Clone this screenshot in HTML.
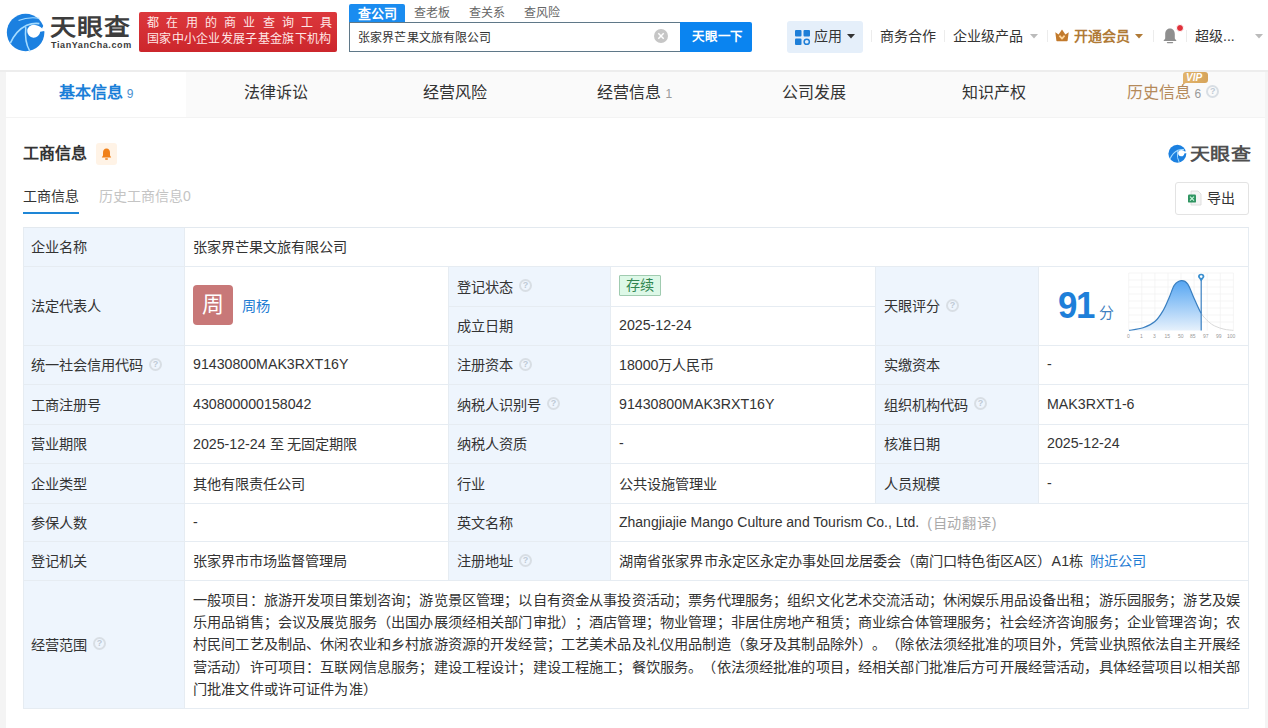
<!DOCTYPE html>
<html lang="zh-CN"><head><meta charset="utf-8">
<style>
*{box-sizing:border-box;margin:0;padding:0}
html,body{width:1268px;height:728px;overflow:hidden}
body{background:#f4f4f4;font-family:"Liberation Sans",sans-serif;text-spacing-trim:space-all;color:#333;position:relative}
.abs{position:absolute}
.nw{white-space:nowrap}
#hdr{position:absolute;left:0;top:0;width:1268px;height:70px;background:#fff;border-bottom:0}
#card{position:absolute;left:6px;top:72px;width:1259px;height:656px;background:#fff}
#hline{position:absolute;left:0;top:70px;width:1268px;height:2px;background:#ededed}
#tabs{position:absolute;left:6px;top:72px;width:1259px;height:46px;background:#fafafa;border-bottom:1px solid #f3f3f3}
.tab{position:absolute;top:0;height:45px;width:180px;text-align:center;font-size:16px;line-height:42px;color:#333}
.tab.act{background:#fff;color:#1b7fd8;font-weight:bold}
.tab sup{font-size:12px;font-weight:normal;vertical-align:baseline;color:#999;margin-left:4px}
.tab.act sup{color:#4a8fd0;margin-left:4px}
table{border-collapse:collapse}
#tbl{position:absolute;left:23px;top:227px;width:1225px;border:1px solid #e8edf2}
.lbl{background:#eef5fd}
.cell{position:absolute;font-size:14px;line-height:16px;white-space:nowrap}
.q{display:inline-block;width:13px;height:13px;border:2px solid #d8dee4;border-radius:50%;font-size:9px;line-height:9px;text-align:center;color:#bfcad5;font-weight:bold;vertical-align:middle;margin-left:6px;position:relative;top:0px}

.c{position:absolute;border-right:1px solid #e6ecf2;border-bottom:1px solid #e6ecf2;font-size:14.2px;padding-bottom:2px;color:#333;white-space:nowrap;display:flex;align-items:center;padding-left:8px}
.l{background:#eef5fd}
</style></head><body>
<div id="hdr">
  <svg class="abs" style="left:4px;top:10px" width="46" height="46" viewBox="0 0 728 728">
    <circle cx="342" cy="356" r="297" fill="#1b80e0"/>
    <path d="M600 130 Q660 230 600 290 L728 300 L728 100 Z" fill="#fff"/>
    <path d="M470 232 A103 103 0 1 0 573 345 L660 330 L660 280 L600 290 Q560 240 470 232 Z" fill="#fff"/>
    <path d="M100 525 Q190 320 360 240 Q450 205 560 215" stroke="#a6dcff" stroke-width="26" fill="none"/>
    <path d="M410 655 Q320 500 345 270" stroke="#a6dcff" stroke-width="24" fill="none"/>
    <path d="M230 165 Q380 105 560 130" stroke="#a6dcff" stroke-width="18" fill="none"/>
</svg>
  <div class="abs nw" style="left:50px;top:13px;font-size:26px;line-height:32px;font-weight:bold;color:#3d3d3d;letter-spacing:1px;transform:scaleY(0.86);transform-origin:0 0">天眼查</div>
  <div class="abs nw" style="left:51px;top:40px;font-size:9px;line-height:10px;font-weight:bold;color:#3a3a3a;letter-spacing:0.6px">TianYanCha.com</div>
  <div class="abs" style="left:139px;top:12px;width:198px;height:40px;background:linear-gradient(#dc383c,#cc262c);border-radius:2px"></div>
  <div class="abs nw" style="left:147px;top:15px;font-size:12px;line-height:16px;color:#ffe6e6;letter-spacing:7.25px">都在用的商业查询工具</div>
  <div class="abs nw" style="left:147px;top:31px;font-size:12px;line-height:16px;color:#ffe6e6;letter-spacing:0.3px">国家中小企业发展子基金旗下机构</div>
  <div class="abs" style="left:349px;top:4px;width:56px;height:19px;background:#1a8cf0;border-radius:2px 2px 0 0"></div>
  <div class="abs nw" style="left:358px;top:5px;font-size:13px;line-height:17px;color:#fff;font-weight:bold">查公司</div>
  <div class="abs nw" style="left:414px;top:5px;font-size:12px;line-height:17px;color:#666">查老板</div>
  <div class="abs nw" style="left:469px;top:5px;font-size:12px;line-height:17px;color:#666">查关系</div>
  <div class="abs nw" style="left:524px;top:5px;font-size:12px;line-height:17px;color:#666">查风险</div>
  <div class="abs" style="left:349px;top:22px;width:332px;height:30px;border:1px solid #5f7888;border-right:none;background:#fff"></div>
  <div class="abs nw" style="left:358px;top:30px;font-size:12px;line-height:16px;color:#333;letter-spacing:0.15px">张家界芒果文旅有限公司</div>
  <div class="abs" style="left:654px;top:29px;width:14px;height:14px;border-radius:50%;background:#c6c6c6"></div>
  <svg class="abs" style="left:654px;top:29px" width="14" height="14" viewBox="0 0 14 14"><path d="M4.3 4.3L9.7 9.7M9.7 4.3L4.3 9.7" stroke="#fff" stroke-width="1.5"/></svg>
  <div class="abs" style="left:680px;top:22px;width:72px;height:30px;background:#0a84f0;border-radius:0 2px 2px 0"></div>
  <div class="abs nw" style="left:692px;top:29px;font-size:12.5px;line-height:16px;color:#fff;font-weight:bold;letter-spacing:-0.2px">天眼一下</div>
  <div class="abs" style="left:787px;top:21px;width:76px;height:32px;background:#e5effa;border-radius:3px"></div>
  <svg class="abs" style="left:795px;top:30px" width="16" height="16" viewBox="0 0 16 16">
    <rect x="0" y="0" width="6.5" height="6.5" rx="1" fill="#1f7fd8"/><rect x="8.5" y="0" width="6.5" height="6.5" rx="1" fill="#1f7fd8"/>
    <rect x="0" y="8.5" width="6.5" height="6.5" rx="1" fill="#1f7fd8"/><circle cx="11.75" cy="11.75" r="2.6" fill="none" stroke="#1f7fd8" stroke-width="1.5"/>
  </svg>
  <div class="abs nw" style="left:814px;top:28px;font-size:14px;line-height:17px;color:#333">应用</div>
  <svg class="abs" style="left:847px;top:34px" width="8" height="5" viewBox="0 0 8 5"><path d="M0 0H8L4 4.5Z" fill="#333"/></svg>
  <div class="abs" style="left:871px;top:30px;width:1px;height:12px;background:#ececec"></div>
  <div class="abs nw" style="left:880px;top:28px;font-size:14px;line-height:17px;color:#333">商务合作</div>
  <div class="abs" style="left:944px;top:30px;width:1px;height:12px;background:#ececec"></div>
  <div class="abs nw" style="left:953px;top:28px;font-size:14px;line-height:17px;color:#333">企业级产品</div>
  <svg class="abs" style="left:1030px;top:34px" width="8" height="5" viewBox="0 0 8 5"><path d="M0 0H8L4 4.5Z" fill="#bbb"/></svg>
  <div class="abs" style="left:1047px;top:30px;width:1px;height:12px;background:#ececec"></div>
  <svg class="abs" style="left:1055px;top:29px" width="14" height="13" viewBox="0 0 14 13">
    <path d="M0.3 3.2 L3.6 5.6 L7 0.4 L10.4 5.6 L13.7 3.2 L12.6 11.8 Q12.5 12.2 12 12.2 L2 12.2 Q1.5 12.2 1.4 11.8 Z" fill="#c27a2c"/>
    <path d="M4.4 6.6 L7 9.6 L9.6 6.6" stroke="#ffd59a" stroke-width="1.7" fill="none" stroke-linejoin="round"/>
  </svg>
  <div class="abs nw" style="left:1074px;top:28px;font-size:14px;line-height:17px;color:#b07a36;font-weight:bold">开通会员</div>
  <svg class="abs" style="left:1135px;top:34px" width="8" height="5" viewBox="0 0 8 5"><path d="M0 0H8L4 4.5Z" fill="#b07a36"/></svg>
  <div class="abs" style="left:1153px;top:30px;width:1px;height:12px;background:#ececec"></div>
  <svg class="abs" style="left:1162px;top:27px" width="16" height="18" viewBox="0 0 16 18">
    <path d="M8 1.5 C4.8 1.5 3.2 4 3.2 7.2 L3.2 11.6 L1.4 14 L14.6 14 L12.8 11.6 L12.8 7.2 C12.8 4 11.2 1.5 8 1.5Z" fill="#8f8f8f"/>
    <path d="M5.5 15.6 H10.5" stroke="#8f8f8f" stroke-width="1.4" stroke-linecap="round"/>
  </svg>
  <div class="abs" style="left:1176px;top:24px;width:8px;height:8px;border-radius:50%;background:#e0303a;border:1px solid #fff"></div>
  <div class="abs" style="left:1186px;top:30px;width:1px;height:12px;background:#ececec"></div>
  <div class="abs nw" style="left:1195px;top:28px;font-size:14px;line-height:17px;color:#333">超级...</div>
  <svg class="abs" style="left:1255px;top:34px" width="8" height="5" viewBox="0 0 8 5"><path d="M0 0H8L4 4.5Z" fill="#bbb"/></svg>
</div>
<div id="hline"></div>
<div id="card"></div>
<div id="tabs">
  <div class="tab act" style="left:0">基本信息<sup>9</sup></div>
  <div class="tab" style="left:179.6px">法律诉讼</div>
  <div class="tab" style="left:359.2px">经营风险</div>
  <div class="tab" style="left:538.8px">经营信息<sup>1</sup></div>
  <div class="tab" style="left:718.4px">公司发展</div>
  <div class="tab" style="left:898px">知识产权</div>
  <div class="tab" style="left:1077.6px;color:#b58a5a;text-align:left;padding-left:43px">历史信息<sup>6</sup><span class="q" style="margin-left:5px;top:-2px">?</span></div>
</div>
<div class="abs nw" style="left:23px;top:144px;font-size:16px;line-height:20px;font-weight:bold;color:#333">工商信息</div>
<div class="abs" style="left:96px;top:143px;width:21px;height:22px;background:#fff3e6;border-radius:3px"></div>
<svg class="abs" style="left:100px;top:147px" width="13" height="14" viewBox="0 0 13 14"><path d="M6.5 1.5C4.2 1.5 3 3.4 3 5.8V8.6L1.8 10.6H11.2L10 8.6V5.8C10 3.4 8.8 1.5 6.5 1.5Z" fill="#f08019"/><rect x="5" y="11.2" width="3" height="1.6" rx="0.8" fill="#f08019"/></svg>
<div class="abs nw" style="left:23px;top:188px;font-size:14px;line-height:17px;color:#333">工商信息</div>
<div class="abs" style="left:23px;top:212px;width:56px;height:2px;background:#1e86d6"></div>
<div class="abs nw" style="left:99px;top:188px;font-size:14px;line-height:17px;color:#c4c4c4">历史工商信息0</div>
<div id="tbl2">
<div class="c l" style="left:23px;top:227px;width:162px;height:40px;">企业名称</div>
<div class="c" style="left:185px;top:227px;width:1064px;height:40px;">张家界芒果文旅有限公司</div>
<div class="c l" style="left:23px;top:267px;width:162px;height:79px;">法定代表人</div>
<div class="c" style="left:185px;top:267px;width:264px;height:79px;"><span style="display:inline-block;width:40px;height:40px;border-radius:4px;background:#c87878;color:#fff;font-size:22px;line-height:40px;text-align:center;margin-right:9px">周</span><span style="color:#1f7cd3">周杨</span></div>
<div class="c l" style="left:449px;top:267px;width:162px;height:40px;">登记状态<span class="q">?</span></div>
<div class="c" style="left:611px;top:267px;width:265px;height:40px;"><span style="display:inline-block;height:21px;line-height:19px;padding:0 6px;border:1px solid #a0cbb0;background:#ddf8e7;color:#2f8550;border-radius:1px">存续</span></div>
<div class="c l" style="left:449px;top:307px;width:162px;height:39px;">成立日期</div>
<div class="c" style="left:611px;top:307px;width:265px;height:39px;">2025-12-24</div>
<div class="c l" style="left:876px;top:267px;width:163px;height:79px;">天眼评分<span class="q">?</span></div>
<div class="c" style="left:1039px;top:267px;width:210px;height:79px;"></div>
<div class="c l" style="left:23px;top:346px;width:162px;height:39px;">统一社会信用代码<span class="q">?</span></div>
<div class="c" style="left:185px;top:346px;width:264px;height:39px;">91430800MAK3RXT16Y</div>
<div class="c l" style="left:449px;top:346px;width:162px;height:39px;">注册资本<span class="q">?</span></div>
<div class="c" style="left:611px;top:346px;width:265px;height:39px;">18000万人民币</div>
<div class="c l" style="left:876px;top:346px;width:163px;height:39px;">实缴资本</div>
<div class="c" style="left:1039px;top:346px;width:210px;height:39px;">-</div>
<div class="c l" style="left:23px;top:385px;width:162px;height:40px;">工商注册号</div>
<div class="c" style="left:185px;top:385px;width:264px;height:40px;">430800000158042</div>
<div class="c l" style="left:449px;top:385px;width:162px;height:40px;">纳税人识别号<span class="q">?</span></div>
<div class="c" style="left:611px;top:385px;width:265px;height:40px;">91430800MAK3RXT16Y</div>
<div class="c l" style="left:876px;top:385px;width:163px;height:40px;">组织机构代码<span class="q">?</span></div>
<div class="c" style="left:1039px;top:385px;width:210px;height:40px;">MAK3RXT1-6</div>
<div class="c l" style="left:23px;top:425px;width:162px;height:39px;">营业期限</div>
<div class="c" style="left:185px;top:425px;width:264px;height:39px;">2025-12-24 至 无固定期限</div>
<div class="c l" style="left:449px;top:425px;width:162px;height:39px;">纳税人资质</div>
<div class="c" style="left:611px;top:425px;width:265px;height:39px;">-</div>
<div class="c l" style="left:876px;top:425px;width:163px;height:39px;">核准日期</div>
<div class="c" style="left:1039px;top:425px;width:210px;height:39px;">2025-12-24</div>
<div class="c l" style="left:23px;top:464px;width:162px;height:40px;">企业类型</div>
<div class="c" style="left:185px;top:464px;width:264px;height:40px;">其他有限责任公司</div>
<div class="c l" style="left:449px;top:464px;width:162px;height:40px;">行业</div>
<div class="c" style="left:611px;top:464px;width:265px;height:40px;">公共设施管理业</div>
<div class="c l" style="left:876px;top:464px;width:163px;height:40px;">人员规模</div>
<div class="c" style="left:1039px;top:464px;width:210px;height:40px;">-</div>
<div class="c l" style="left:23px;top:504px;width:162px;height:38px;">参保人数</div>
<div class="c" style="left:185px;top:504px;width:264px;height:38px;">-</div>
<div class="c l" style="left:449px;top:504px;width:162px;height:38px;">英文名称</div>
<div class="c" style="left:611px;top:504px;width:638px;height:38px;"><span style="font-size:14px">Zhangjiajie Mango Culture and Tourism Co., Ltd.</span><span style="color:#aaa;margin-left:8px;letter-spacing:0.8px">(自动翻译)</span></div>
<div class="c l" style="left:23px;top:542px;width:162px;height:39px;">登记机关</div>
<div class="c" style="left:185px;top:542px;width:264px;height:39px;">张家界市市场监督管理局</div>
<div class="c l" style="left:449px;top:542px;width:162px;height:39px;">注册地址<span class="q">?</span></div>
<div class="c" style="left:611px;top:542px;width:638px;height:39px;"><span style="letter-spacing:0.1px">湖南省张家界市永定区永定办事处回龙居委会（南门口特色街区A区）A1栋</span><span style="color:#1f7cd3;margin-left:7px">附近公司</span></div>
<div class="c l" style="left:23px;top:581px;width:162px;height:128px;">经营范围<span class="q">?</span></div>
<div class="c" style="left:185px;top:581px;width:1064px;height:128px;"><div style="line-height:22.2px;white-space:nowrap;overflow:hidden;width:1056px;letter-spacing:0.15px;position:relative;top:1px">一般项目：旅游开发项目策划咨询；游览景区管理；以自有资金从事投资活动；票务代理服务；组织文化艺术交流活动；休闲娱乐用品设备出租；游乐园服务；游艺及娱<br>乐用品销售；会议及展览服务（出国办展须经相关部门审批）；酒店管理；物业管理；非居住房地产租赁；商业综合体管理服务；社会经济咨询服务；企业管理咨询；农<br>村民间工艺及制品、休闲农业和乡村旅游资源的开发经营；工艺美术品及礼仪用品制造（象牙及其制品除外）。（除依法须经批准的项目外，凭营业执照依法自主开展经<br>营活动）许可项目：互联网信息服务；建设工程设计；建设工程施工；餐饮服务。（依法须经批准的项目，经相关部门批准后方可开展经营活动，具体经营项目以相关部<br>门批准文件或许可证件为准）</div></div>
<div class="abs" style="left:23px;top:227px;width:1226px;height:482px;border:1px solid #e6ecf2;border-top-color:#e3e9ef;pointer-events:none"></div>
</div><!--/tbl2-->
<div class="abs nw" style="left:1058px;top:285px;font-size:37.5px;line-height:40px;font-weight:bold;color:#1e7fd9;letter-spacing:-1.5px;transform:scaleX(0.93);transform-origin:0 0">91</div>
<div class="abs nw" style="left:1099px;top:303.5px;font-size:15px;line-height:17px;color:#3f7fc0">分</div>
<svg class="abs" style="left:1124px;top:270px" width="116" height="72" viewBox="0 0 116 72">
  <defs><linearGradient id="gf" x1="0" y1="0" x2="0" y2="1"><stop offset="0" stop-color="#55a5f2"/><stop offset="1" stop-color="#e6f1fc"/></linearGradient></defs>
  <g stroke="#f0f0f0" stroke-width="0.7">
    <path d="M4.7 3H109.4M4.7 10H109.4M4.7 17H109.4M4.7 24H109.4M4.7 31H109.4M4.7 38H109.4M4.7 45H109.4M4.7 52H109.4"/>
    <path d="M4.7 3V60.6M17.8 3V60.6M30.9 3V60.6M44 3V60.6M57 3V60.6M70.1 3V60.6M83.2 3V60.6M96.3 3V60.6M109.4 3V60.6"/>
  </g>
  <path d="M5.1,60.4 C7.43,59.97 14.80,59.28 19.1,57.8 C23.40,56.32 27.57,54.37 30.9,51.5 C34.23,48.63 36.68,44.68 39.1,40.6 C41.52,36.52 43.52,31.23 45.4,27 C47.28,22.77 48.43,17.92 50.4,15.2 C52.37,12.48 55.00,10.92 57.2,10.7 C59.40,10.48 61.48,11.03 63.6,13.9 C65.72,16.77 67.63,23.00 69.9,27.9 C72.17,32.80 74.78,39.37 77.2,43.3 L77.2,60.4 L5.1,60.4 Z" fill="url(#gf)"/>
  <path d="M5.1,60.4 C7.43,59.97 14.80,59.28 19.1,57.8 C23.40,56.32 27.57,54.37 30.9,51.5 C34.23,48.63 36.68,44.68 39.1,40.6 C41.52,36.52 43.52,31.23 45.4,27 C47.28,22.77 48.43,17.92 50.4,15.2 C52.37,12.48 55.00,10.92 57.2,10.7 C59.40,10.48 61.48,11.03 63.6,13.9 C65.72,16.77 67.63,23.00 69.9,27.9 C72.17,32.80 74.78,39.37 77.2,43.3" stroke="#3a7fc0" stroke-width="1.2" fill="none"/>
  <path d="M77.2,43.3 C79.62,47.23 82.13,49.38 84.4,51.5 C86.67,53.62 88.20,54.72 90.8,56 C93.40,57.28 96.90,58.47 100,59.2 C103.10,59.93 107.83,60.20 109.4,60.4" stroke="#d5d5d5" stroke-width="0.9" fill="none"/>
  <path d="M77.2 9V60.6" stroke="#3a7fc0" stroke-width="1.2"/>
  <path d="M74 7 A3.2 3.2 0 1 1 80.4 7 L77.2 11.5 Z" fill="#3a8fd0"/>
  <circle cx="77.2" cy="6.6" r="1.3" fill="#fff"/>
  <g font-size="5" fill="#999" font-family="Liberation Sans">
    <text x="3" y="68">0</text><text x="16" y="68">1</text><text x="29" y="68">3</text><text x="40.5" y="68">15</text><text x="54" y="68">50</text><text x="66" y="68">85</text><text x="79" y="68">97</text><text x="92" y="68">99</text><text x="103" y="68">100</text>
  </g>
</svg>
<svg class="abs" style="left:1167px;top:143px" width="22" height="22" viewBox="0 0 728 728">
    <circle cx="342" cy="356" r="297" fill="#1b80e0"/>
    <path d="M600 130 Q660 230 600 290 L728 300 L728 100 Z" fill="#fff"/>
    <path d="M470 232 A103 103 0 1 0 573 345 L660 330 L660 280 L600 290 Q560 240 470 232 Z" fill="#fff"/>
    <path d="M100 525 Q190 320 360 240 Q450 205 560 215" stroke="#a6dcff" stroke-width="34" fill="none"/>
    <path d="M410 655 Q320 500 345 270" stroke="#a6dcff" stroke-width="32" fill="none"/>
</svg>
<div class="abs nw" style="left:1190px;top:144px;font-size:20px;line-height:24px;font-weight:bold;color:#505050;letter-spacing:0.3px;transform:scaleY(0.84);transform-origin:0 0">天眼查</div>
<div class="abs" style="left:1175px;top:182px;width:74px;height:33px;border:1px solid #e3e3e3;border-radius:3px;background:#fff"></div>
<svg class="abs" style="left:1187px;top:190px" width="15" height="16" viewBox="0 0 15 16">
  <path d="M4 1H11L14 4V15H4Z" fill="#f4f4f4" stroke="#d8d8d8" stroke-width="0.8"/>
  <rect x="1" y="4.6" width="8" height="8" rx="1.2" fill="#2f9461"/>
  <path d="M3 6.6L7 10.6M7 6.6L3 10.6" stroke="#c8f5dc" stroke-width="1.2"/>
</svg>
<div class="abs nw" style="left:1207px;top:190px;font-size:14px;line-height:17px;color:#333">导出</div>
<div class="abs" style="left:1183px;top:72px;width:24.5px;height:10.5px;background:linear-gradient(90deg,#e2b46c,#d6a45a);border-radius:3px 3px 3px 0"></div><div class="abs" style="left:1183px;top:82px;width:0;height:0;border-top:3px solid #e0b06a;border-right:4px solid transparent"></div>
<div class="abs nw" style="left:1186px;top:71.5px;font-size:10px;line-height:12px;font-weight:bold;font-style:italic;color:#fff">VIP</div>
</body></html>
